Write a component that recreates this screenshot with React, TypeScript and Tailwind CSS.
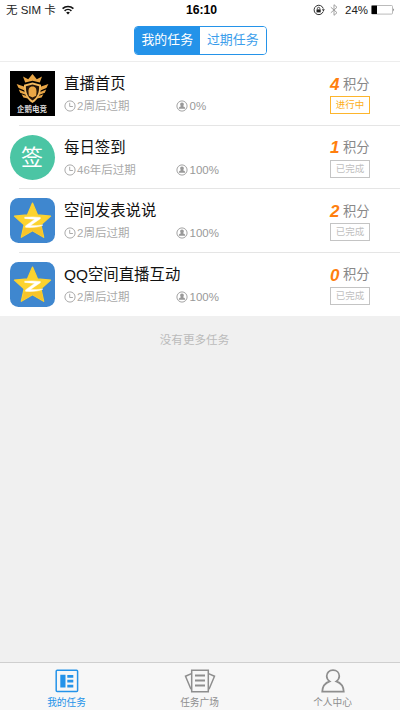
import { clsx } from 'clsx'

type Logo = 'esports' | 'sign' | 'qzone'

interface Task {
  id: number
  logo: Logo
  title: string
  expires: string
  percent: string
  points: number
  done: boolean
}

const tasks: Task[] = [
  { id: 1, logo: 'esports', title: '直播首页', expires: '2周后过期', percent: '0%', points: 4, done: false },
  { id: 2, logo: 'sign', title: '每日签到', expires: '46年后过期', percent: '100%', points: 1, done: true },
  { id: 3, logo: 'qzone', title: '空间发表说说', expires: '2周后过期', percent: '100%', points: 2, done: true },
  { id: 4, logo: 'qzone', title: 'QQ空间直播互动', expires: '2周后过期', percent: '100%', points: 0, done: true },
]

function StatusBar() {
  return (
    <div className="flex h-5 items-center pl-1.5 pr-[5px] text-[11.5px] text-[#222]">
      <div className="flex flex-1 items-center">
        <span className="whitespace-nowrap leading-5">无 SIM 卡</span>
        <svg className="ml-[6px]" width="12" height="10" viewBox="0 0 12 10" fill="none" stroke="#111" strokeWidth="1.6">
          <path d="M.6 3.6a7.8 7.8 0 0 1 10.8 0" />
          <path d="M2.6 5.8a4.9 4.9 0 0 1 6.8 0" />
          <path d="M6 9.6 4.1 7.6a2.7 2.7 0 0 1 3.8 0z" fill="#111" stroke="none" />
        </svg>
      </div>
      <span className="pl-[2px] text-[12.2px] font-bold leading-5 text-black">16:10</span>
      <div className="flex flex-1 items-center justify-end">
        <svg width="12" height="12" viewBox="0 0 12 12" fill="none" stroke="#333">
          <path d="M10.2 7.6A4.7 4.7 0 1 1 10.3 4.6" />
          <path d="M8.9 5.2h3L10.4 7.4z" fill="#333" stroke="none" />
          <path d="M3.5 5.4h4.2v3H3.5z" fill="#222" stroke="none" />
          <path d="M4.4 5.4v-.9a1.2 1.2 0 0 1 2.4 0v.9" strokeWidth=".9" />
        </svg>
        <svg className="ml-[5px]" width="8" height="12" viewBox="0 0 8 12" fill="none" stroke="#999" strokeWidth=".9">
          <path d="M.8 3.2 7 8.7 4 11.3V.7l3 2.6L.8 8.8" />
        </svg>
        <span className="ml-[7px] leading-5">24%</span>
        <svg className="ml-[3px]" width="24" height="10" viewBox="0 0 24 10">
          <rect x=".5" y=".5" width="21" height="8.6" rx="1" fill="#fff" stroke="#aaa" strokeWidth=".8" />
          <rect x=".6" y=".6" width="5.4" height="8.4" fill="#000" />
          <path d="M22.3 3.2q1.5 1.6 0 3.2z" fill="#555" />
        </svg>
      </div>
    </div>
  )
}

function TaskLogo({ logo }: { logo: Logo }) {
  if (logo === 'esports') {
    return (
      <div className="flex h-[45px] w-[45px] flex-col items-center bg-black">
        <svg className="mt-[3px]" width="33" height="30" viewBox="0 0 33 30" fill="#e9a646">
          <path d="m9.2 8.6-2.2-6 5.2 2.7L16.500 0l4.300 5.300L26 2.600l-2.200 6-7.300-1.900z" />
          <path d="m.6 10 8 2.800v3.700L2.600 14zM2.800 15.500l6 2.600.7 2.600-5.300-2zM5.600 20.300l4.800 1.700 1.800 2.600-4.800-1zM32.400 10l-8 2.800v3.700l6-2.500zM30.200 15.500l-6 2.600-.7 2.600 5.300-2zM27.400 20.300 22.600 22l-1.800 2.600 4.800-1z" />
          <path d="M16.500 8.500 25 10.700c.4 8.500-2.200 14-8.500 18.300C10.200 24.700 7.600 19.200 8 10.700z" fill="#f3b95d" />
          <path d="m16.500 10.500 6.600 1.700c.2 6.500-1.800 11-6.600 14.400-4.800-3.400-6.800-7.900-6.600-14.400z" fill="#24150a" />
          <path d="M16.500 12.400c3.300 0 4 2.500 4 5l-.3 4.300-3.700 1.900-3.700-1.900-.3-4.300c0-2.500.7-5 4-5z" />
        </svg>
        <span className="whitespace-nowrap text-[7.5px] font-bold leading-[11px] text-[#ddd]">企鹅电竞</span>
      </div>
    )
  }
  if (logo === 'sign') {
    return (
      <div className="flex h-[45px] w-[45px] items-center justify-center rounded-full bg-[#4bc5a4] pt-px text-[22px] leading-none text-white">
        签
      </div>
    )
  }
  return (
    <svg width="45" height="45" viewBox="0 0 45 45">
      <rect width="45" height="45" rx="8.5" fill="#3f87cf" />
      <path
        d="m22.5 5 5.1 11.900 13 1.200-9.700 8.600 2.800 12.600-11.200-6.500-11.200 6.500 2.800-12.600-9.700-8.600 13-1.200z"
        fill="#fcd32f"
        stroke="#fcd32f"
        strokeWidth="1.2"
        strokeLinejoin="round"
      />
      <path d="m14 30 17.500-.5 1.900 9.500-10.900-6.300-11 6.300z" fill="#f8c42a" />
      <path d="M14.700 19.300q8-.8 15.600.2v1.200L20.500 27.400q6 .6 12.500-.4-5.500 3-17.300 2.300l-.2-1.400 9.300-6.600q-5-.6-10.100-.9z" fill="#fff" stroke="#fff" strokeWidth=".5" />
    </svg>
  )
}

function ClockIcon() {
  return (
    <svg width="12" height="12" viewBox="0 0 12 12" fill="none" stroke="#aaa">
      <circle cx="6" cy="6" r="5.1" />
      <path d="M5.7 2.8v3.7h3.2" />
    </svg>
  )
}

function PersonIcon() {
  return (
    <svg width="12" height="12" viewBox="0 0 12 12">
      <circle cx="6" cy="6" r="5.1" fill="none" stroke="#999" strokeWidth=".9" />
      <path d="M6 2.400c1.300 0 1.900.9 1.800 2 0 .8-.3 1.300-.7 1.700 0 .7 2.200.7 2.200 2.700H2.700c0-2 2.200-2 2.200-2.700-.4-.4-.7-.9-.7-1.700-.1-1.100.5-2 1.800-2z" fill="#999" />
    </svg>
  )
}

function TaskRow({ task, last }: { task: Task; last: boolean }) {
  return (
    <li className="h-[63.6px] pl-[9.5px]">
      <div className="flex h-full">
        <div className="pt-[9px]">
          <TaskLogo logo={task.logo} />
        </div>
        <div className="ml-[9.5px] flex-1 pt-[11px]">
          <h2 className="whitespace-nowrap text-[15.4px] leading-[22px] text-[#111]">{task.title}</h2>
          <div className="mt-[3px] flex h-4 items-center text-[11.5px] leading-4 text-[#aaa]">
            <div className="flex w-28 items-center gap-px whitespace-nowrap">
              <ClockIcon />
              <span>{task.expires}</span>
            </div>
            <div className="flex items-center gap-[1.5px] text-[#999]">
              <PersonIcon />
              <span>{task.percent}</span>
            </div>
          </div>
        </div>
        <div className="w-[70px] pt-[11px]">
          <div className="flex h-[23px] items-center whitespace-nowrap">
            <span className="w-[13px] text-[17px] font-bold italic text-[#ff7f0e]">{task.points}</span>
            <span className="text-[13.3px] text-[#888]">积分</span>
          </div>
          <div
            className={clsx(
              'flex h-[18px] w-10 items-center justify-center border text-[9.5px] leading-none',
              task.done ? 'border-[#c4c4c4] text-[#c0c0c0]' : 'border-[#fdb52c] text-[#fdae18]'
            )}
          >
            {task.done ? '已完成' : '进行中'}
          </div>
        </div>
      </div>
      {!last && <div className="-mt-px ml-[9px] h-px bg-[#e5e5e5]" />}
    </li>
  )
}

function TabBar() {
  return (
    <nav className="flex h-12 border-t border-[#cfcfcf] bg-[#f7f7f7] pr-px text-[9.7px] text-[#8e8e8e]">
      <a className="flex flex-1 flex-col items-center pt-[6px] text-[#2493e9]">
        <svg width="24" height="24" viewBox="0 0 24 24">
          <rect x="1.2" y="1.2" width="21.4" height="21.4" rx="1" fill="none" stroke="currentColor" strokeWidth="1.5" />
          <path d="M5.300 5.700h5.200v12.800H5.300zM12.300 6h6v2.700h-6zM12.300 10.800h6v2.700h-6zM12.300 15.700h6v2.700h-6z" fill="currentColor" />
        </svg>
        <span className="mt-[3px] leading-[14px]">我的任务</span>
      </a>
      <a className="flex flex-1 flex-col items-center pt-[6px]">
        <svg width="32" height="24" viewBox="0 0 32 24" fill="none" stroke="currentColor" strokeWidth="1.5">
          <path d="M7.700 1.300h16.600v21.400H7.700z" />
          <path d="M11 6.500h10M11 11.500h10M11 16.500h10" strokeWidth="2" />
          <path d="M7.500 4.600 1.500 7.200l5.500 13M24.500 4.600l6 2.600-5.500 13" />
        </svg>
        <span className="mt-[3px] leading-[14px]">任务广场</span>
      </a>
      <a className="flex flex-1 flex-col items-center pt-[6px]">
        <svg width="24" height="24" viewBox="0 0 24 24" fill="none" stroke="currentColor" strokeWidth="1.7">
          <path d="M8.700 12.400C6.500 10.900 5.700 9.300 5.700 7.100c0-3.500 2.600-6 6.300-6s6.300 2.500 6.300 6c0 2.200-.8 3.800-3 5.300 4.900 1.600 7.200 5 7.500 10.300H1.200c.3-5.300 2.600-8.700 7.500-10.300z" />
        </svg>
        <span className="mt-[3px] leading-[14px]">个人中心</span>
      </a>
    </nav>
  )
}

export default function App() {
  return (
    <div className="flex h-[710px] w-[400px] flex-col overflow-hidden bg-[#f0f0f0] font-['Liberation_Sans','Noto_Sans_CJK_SC',sans-serif]">
      <header className="h-[62px] border-b border-[#ededed] bg-white">
        <StatusBar />
        <div className="mx-auto mt-[6px] flex h-[29px] w-[133px] overflow-hidden rounded-[4px] border border-[#2493e9] text-[12.9px]">
          <button className="flex-1 bg-[#2493e9] leading-none text-white">我的任务</button>
          <button className="flex-1 bg-white leading-none text-[#3c9eeb]">过期任务</button>
        </div>
      </header>
      <main className="flex-1">
        <ul className="bg-white">
          {tasks.map((task, i) => (
            <TaskRow key={task.id} task={task} last={i === tasks.length - 1} />
          ))}
        </ul>
        <p className="mt-4 pr-[11px] text-center text-[11.6px] leading-4 text-[#bbb]">没有更多任务</p>
      </main>
      <TabBar />
    </div>
  )
}
